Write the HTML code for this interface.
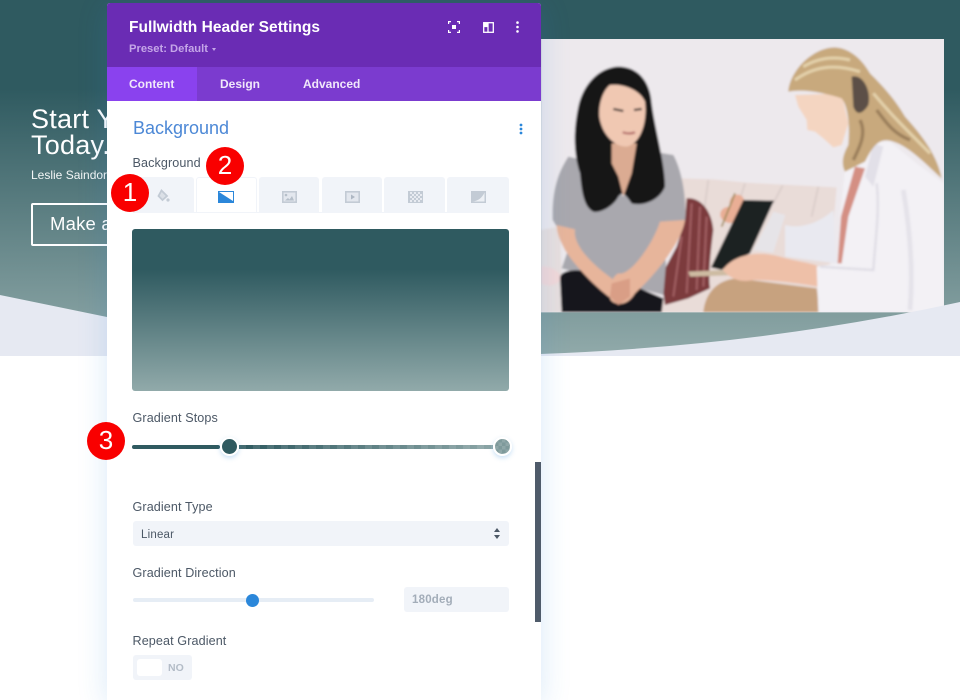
<!DOCTYPE html>
<html lang="en">
<head>
<meta charset="utf-8">
<title>Fullwidth Header Settings</title>
<style>
html,body{margin:0;padding:0}
body{width:960px;height:700px;overflow:hidden;background:#fff;font-family:"Liberation Sans",sans-serif;position:relative}
div,span{position:absolute;white-space:nowrap}
#hero{left:0;top:0;width:960px;height:356px;background:linear-gradient(180deg,#2f5a60 25%,#91aaaa 100%)}
#bg{position:absolute;left:0;top:0}
.h{color:#fff;font-size:27px;left:31px;letter-spacing:.25px}
#panel{left:107px;top:3px;width:434px;height:697px;background:#fff;border-radius:3px 3px 0 0;box-shadow:0 5px 30px rgba(43,135,218,.18);overflow:hidden}
#head{left:0;top:0;width:434px;height:64px;background:#6a2cb4}
#tabs{left:0;top:64px;width:434px;height:34px;background:#7b3bcf}
#act{left:0;top:0;width:90px;height:34px;background:#8a42ee}
.tab{top:9px;color:#f1e8fb;font-size:12px;font-weight:bold;line-height:16px}
.l{left:25.5px;color:#4c5866;font-size:12.6px;line-height:16px;letter-spacing:.1px}
.t{top:174px;height:36px;background:#f1f4f9;border-radius:3px 3px 0 0}
.n{width:38px;height:38px;border-radius:50%;background:#f90000;color:#fff;font-size:26px;line-height:37px;text-align:center}
svg.i{position:absolute;overflow:visible}
</style>
</head>
<body>
<div id="hero"></div>
<svg id="bg" width="960" height="356" viewBox="0 0 960 356">
<defs>
<filter id="b" x="-2%" y="-2%" width="104%" height="104%"><feGaussianBlur stdDeviation="3"/></filter>
<clipPath id="c"><rect x="3" y="27" width="1209" height="820"/></clipPath>
</defs>
<g transform="translate(540,30) scale(.33333)">
<g clip-path="url(#c)">
<g filter="url(#b)">
<rect x="0" y="20" width="1220" height="840" fill="#ede9ed"/>
<path d="M0 600L60 590 70 847H0Z" fill="#e8dfde"/>
<path d="M425 445L520 448 620 458 730 464 890 472 870 700 830 847H360L430 600Z" fill="#e9dcd8"/>
<path d="M505 450L490 560M615 460L590 540M728 466L700 520M835 470L815 560" stroke="#d9ccc9" stroke-width="5" fill="none"/>
<path d="M3 710C30 705 60 725 65 745 50 770 20 770 3 760Z" fill="#f2d8d8"/>
<path d="M440 505C480 500 515 540 520 600 510 680 505 740 510 775L445 805 375 825 362 740 410 650 435 570Z" fill="#7c3a3e"/>
<path d="M455 520L440 790M480 530L470 780M500 560L490 770M425 620L400 800" stroke="#a36163" stroke-width="6" fill="none"/>
<path d="M85 380C60 420 35 470 38 570L50 590 105 600 65 715 370 795 378 700 360 580 435 570C440 500 425 420 400 375L340 365 250 500 170 400Z" fill="#a9a8ae"/>
<path d="M60 745C60 725 90 718 130 722L215 770 300 775 370 805 365 847H65Z" fill="#15141a"/>
<path d="M50 585L105 598C100 630 125 680 215 745 240 770 235 810 225 812 200 800 120 730 75 660 60 630 50 610 50 585Z" fill="#e7b59b"/>
<path d="M360 575L435 570C425 640 340 740 285 790 265 825 230 830 212 810 200 780 215 740 235 730 270 740 340 640 360 575Z" fill="#e7b59b"/>
<path d="M215 760L270 745 270 800 235 825 210 800Z" fill="#d99e86"/>
<path d="M235 110C290 110 330 150 335 220 345 300 375 400 375 470 360 510 310 530 275 520 260 500 250 480 235 500 220 530 180 550 160 545 130 530 125 480 120 430 100 370 100 300 115 230 130 160 180 112 235 110Z" fill="#131215"/>
<path d="M215 340L290 340 275 430 250 500 235 440 215 400Z" fill="#dbab92"/>
<path d="M210 165C250 160 300 180 315 215 322 270 305 340 260 350 220 350 185 310 178 260 175 220 190 180 210 165Z" fill="#f0c8b2"/>
<path d="M220 237L250 243M282 240L305 237" stroke="#4f423e" stroke-width="7" fill="none"/>
<path d="M248 307Q268 314 285 307" stroke="#b56f6c" stroke-width="7" fill="none"/>
<path d="M600 495C620 505 615 530 600 550 595 575 575 585 555 575 530 560 540 530 570 530 565 505 580 490 600 495Z" fill="#e9ae95"/>
<path d="M585 490L545 590" stroke="#a08a58" stroke-width="5"/>
<path d="M735 585C790 600 850 570 880 540L890 700 735 680Z" fill="#e9e9f0"/>
<path d="M610 510L702 512 630 670 565 705 545 720 513 712Z" fill="#1d2324"/>
<path d="M700 545L736 555 700 668 640 660Z" fill="#e6e4e8"/>
<path d="M445 725L560 720 600 735 450 740Z" fill="#cdbba2"/>
<path d="M490 847C495 790 530 750 590 745L830 775 840 847Z" fill="#c7a27f"/>
<path d="M548 720C580 675 650 660 720 680 770 695 825 700 835 710V770C780 760 700 750 640 750 600 760 570 745 548 720Z" fill="#eec0a8"/>
<path d="M915 420L1000 335 1050 335 1130 400 1212 460V847H835L830 710 895 700 900 560Z" fill="#f3f1f5"/>
<path d="M1010 460C1020 540 1005 640 1000 720L840 710" stroke="#dfdde5" stroke-width="7" fill="none"/>
<path d="M1090 480C1110 600 1120 720 1110 840" stroke="#e4e2e9" stroke-width="14" fill="none"/>
<path d="M1000 340L1030 350 1000 470 975 440Z" fill="#e2e0e8"/>
<path d="M945 410L975 415 925 560 905 700 893 700 903 560Z" fill="#d48f83"/>
<path d="M765 195L905 190 925 280 905 345 880 352 850 325 825 305 802 300 800 270 775 230Z" fill="#f4d5c1"/>
<path d="M745 185C750 120 820 52 885 52 935 55 970 95 990 130 1020 160 1060 200 1095 260 1140 310 1190 370 1205 445 1165 410 1110 350 1060 335 1020 320 1000 345 975 395L915 425C905 405 905 380 925 345 930 290 925 230 905 205 860 190 790 175 745 185Z" fill="#c8a97d"/>
<path d="M935 140C970 130 995 185 985 225 970 250 950 260 940 230Z" fill="#5b5046"/>
<path d="M765 150C820 110 880 100 960 125M790 110C840 80 890 80 930 90M1000 190C1050 250 1090 290 1170 370" stroke="#e4d2ac" stroke-width="9" fill="none"/>
<path d="M1010 240C1040 280 1060 310 1110 330M960 270C980 310 960 350 940 390" stroke="#9b7f5c" stroke-width="10" fill="none"/>
</g>
</g>
</g>
<path d="M0 295L107 317Q330 356 540 354Q760 346 960 302V356H0Z" fill="#e6e9f2"/>
</svg>

<div class="h" style="top:104px;line-height:30px">Start Your Journey</div>
<div class="h" style="top:130px;line-height:30px">Today.</div>
<div style="left:31px;top:167px;color:#f3f6f6;font-size:12px;line-height:16px">Leslie Saindor</div>
<div style="left:31px;top:203px;width:200px;height:39px;border:2px solid #fff;border-radius:2px"></div>
<div style="left:50px;top:213px;color:#fff;font-size:18.5px;line-height:22px;letter-spacing:.2px">Make a</div>

<div id="panel">
  <div id="head">
    <div style="left:22px;top:15px;color:#fff;font-size:15.5px;font-weight:bold;line-height:20px;letter-spacing:.03px">Fullwidth Header Settings</div>
    <div style="left:22px;top:39px;color:#c5a6e8;font-size:11.2px;font-weight:bold;line-height:14px">Preset: Default</div>
    <div style="left:105px;top:45px;width:0;height:0;border:2.5px solid transparent;border-top:3px solid #c5a6e8"></div>
    <svg class="i" style="left:341px;top:18px" width="12" height="12" viewBox="0 0 12 12" fill="none" stroke="#fff" stroke-width="1.2"><path d="M.6 3V.6H3M9 .6h2.4V3M11.4 9v2.4H9M3 11.4H.6V9"/><rect x="4" y="4" width="4" height="4" fill="#fff" stroke="none"/></svg>
    <svg class="i" style="left:376px;top:19px" width="11" height="11" viewBox="0 0 11 11" fill="none"><rect x=".7" y=".7" width="9.6" height="9.6" stroke="#fff" stroke-width="1.3"/><rect x=".7" y=".7" width="4.3" height="4.4" fill="#fff"/><path d="M5 .7v9.6" stroke="#fff" stroke-width="1.3"/></svg>
    <svg class="i" style="left:409px;top:18px" width="3" height="12" viewBox="0 0 3 12" fill="#fff"><circle cx="1.5" cy="1.6" r="1.3"/><circle cx="1.5" cy="6" r="1.3"/><circle cx="1.5" cy="10.4" r="1.3"/></svg>
  </div>
  <div id="tabs">
    <div id="act"></div>
    <div class="tab" style="left:22px">Content</div>
    <div class="tab" style="left:113px">Design</div>
    <div class="tab" style="left:196px">Advanced</div>
  </div>

  <div style="left:26px;top:114px;color:#4c88d6;font-size:18px;line-height:22px;letter-spacing:0">Background</div>
  <svg class="i" style="left:412px;top:120px" width="4" height="12" viewBox="0 0 4 12" fill="#2b87da"><circle cx="2" cy="2" r="1.4"/><circle cx="2" cy="6" r="1.4"/><circle cx="2" cy="10" r="1.4"/></svg>

  <div class="l" style="top:152px">Background</div>

  <div class="t" style="left:26px;width:61px"></div>
  <div class="t" style="left:89px;width:59px;height:35px;background:#fff;border:1px solid #f1f4f9;border-bottom:0"></div>
  <div class="t" style="left:152px;width:60px"></div>
  <div class="t" style="left:215px;width:60px"></div>
  <div class="t" style="left:277px;width:61px"></div>
  <div class="t" style="left:340px;width:62px"></div>
  <div style="left:26px;top:209px;width:376px;height:1px;background:#f1f4f9"></div>

  <svg class="i" style="left:50px;top:186px" width="13" height="14" viewBox="0 0 13 14"><path d="M4.500 1.500L10 7 5.500 11 1.500 7Z" fill="#dbe0e7" stroke="#c3cbd5" stroke-width="1.800"/><circle cx="11" cy="11" r="1.600" fill="#c3cbd5"/></svg>
  <svg class="i" style="left:111px;top:188px" width="16" height="12" viewBox="0 0 16 12"><rect width="16" height="12" fill="#2b87da"/><path d="M1 1H15V10Z" fill="#fff"/></svg>
  <svg class="i" style="left:174.500px;top:188px" width="15" height="12" viewBox="0 0 15 12"><rect x=".8" y=".8" width="13.400" height="10.400" fill="#e3e7ee" stroke="#c3cbd5" stroke-width="1.600"/><circle cx="4" cy="4" r="1.300" fill="#b6bfca"/><path d="M3 9.500L6 7 7.500 8.500 10 5 12 9.500Z" fill="#b6bfca"/></svg>
  <svg class="i" style="left:237.500px;top:188px" width="15" height="12" viewBox="0 0 15 12"><rect x=".8" y=".8" width="13.400" height="10.400" fill="#e3e7ee" stroke="#c3cbd5" stroke-width="1.600"/><path d="M6 3.500L10 6 6 8.500Z" fill="#aeb7c3"/></svg>
  <svg class="i" style="left:300.500px;top:188px" width="15" height="12" viewBox="0 0 15 12"><rect width="15" height="12" fill="#c3cbd5"/><path d="M2 1h2v2H2zM6 1h2v2H6zM10 1h2v2h-2zM4 3h2v2H4zM8 3h2v2H8zM12 3h2v2h-2zM2 5h2v2H2zM6 5h2v2H6zM10 5h2v2h-2zM4 7h2v2H4zM8 7h2v2H8zM12 7h2v2h-2zM2 9h2v2H2zM6 9h2v2H6zM10 9h2v2h-2z" fill="#e8ebf1"/></svg>
  <svg class="i" style="left:363.500px;top:188px" width="15" height="12" viewBox="0 0 15 12"><rect width="15" height="12" fill="#c3cbd5"/><path d="M1.500 10.500C7 10 11 7 13.500 1.500V10.500Z" fill="#edf0f5"/></svg>

  <div style="left:25px;top:226px;width:377px;height:162px;border-radius:3px;background:linear-gradient(180deg,#2f5a60 25%,#91aaaa 100%)"></div>

  <div class="l" style="top:407px">Gradient Stops</div>
  <div style="left:25px;top:442px;width:88px;height:4px;border-radius:2px;background:#2f5a60"></div>
  <div style="left:132px;top:442px;width:254px;height:4px;background:repeating-linear-gradient(90deg,rgba(255,255,255,.1) 0 7px,rgba(255,255,255,0) 7px 14px),linear-gradient(90deg,#2f5a60,#8ba5a6)"></div>
  <div style="left:113px;top:434px;width:15px;height:15px;border-radius:50%;background:#2f5a60;border:2px solid #fff;box-shadow:0 2px 5px rgba(43,135,218,.25)"></div>
  <div style="left:386px;top:434px;width:15px;height:15px;border-radius:50%;border:2px solid #fff;box-shadow:0 2px 5px rgba(43,135,218,.25);background:repeating-conic-gradient(#7e9a9b 0 25%,#8fa7a8 0 50%) 0 0/7px 7px"></div>

  <div style="left:428px;top:459px;width:6px;height:160px;background:#4f5b6a"></div>

  <div class="l" style="top:496px">Gradient Type</div>
  <div style="left:25.500px;top:518px;width:376px;height:25px;background:#f1f4f9;border-radius:3px"></div>
  <div style="left:34px;top:525px;color:#4c5866;font-size:11.500px;line-height:15px;letter-spacing:.2px">Linear</div>
  <div style="left:387px;top:525px;width:0;height:0;border:3px solid transparent;border-top:0;border-bottom:4px solid #4c5866"></div>
  <div style="left:387px;top:532px;width:0;height:0;border:3px solid transparent;border-bottom:0;border-top:4px solid #4c5866"></div>

  <div class="l" style="top:562px">Gradient Direction</div>
  <div style="left:25.500px;top:595px;width:241px;height:4px;border-radius:2px;background:#e6edf5"></div>
  <div style="left:139px;top:591px;width:13px;height:13px;border-radius:50%;background:#2b87da"></div>
  <div style="left:297px;top:584px;width:105px;height:25px;background:#f1f4f9;border-radius:3px"></div>
  <div style="left:305px;top:590px;color:#a3adb9;font-size:11.500px;font-weight:bold;line-height:15px;letter-spacing:.2px">180deg</div>

  <div class="l" style="top:630px">Repeat Gradient</div>
  <div style="left:25.500px;top:652px;width:59px;height:25px;background:#f1f4f9;border-radius:3px"></div>
  <div style="left:30px;top:656px;width:25px;height:17px;background:#fff;border-radius:3px"></div>
  <div style="left:61px;top:658px;color:#b3bcc7;font-size:10.500px;font-weight:bold;line-height:14px">NO</div>
</div>

<div class="n" style="left:111px;top:174px">1</div>
<div class="n" style="left:206px;top:147px">2</div>
<div class="n" style="left:87px;top:422px">3</div>
</body>
</html>
